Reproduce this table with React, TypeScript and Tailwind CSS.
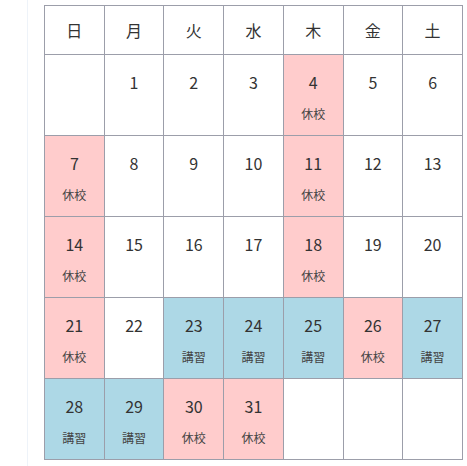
import React from "react";

type Day = { d?: number; note?: "休校" | "講習" };

const weekdays = ["日", "月", "火", "水", "木", "金", "土"];

const weeks: Day[][] = [
  [{}, { d: 1 }, { d: 2 }, { d: 3 }, { d: 4, note: "休校" }, { d: 5 }, { d: 6 }],
  [{ d: 7, note: "休校" }, { d: 8 }, { d: 9 }, { d: 10 }, { d: 11, note: "休校" }, { d: 12 }, { d: 13 }],
  [{ d: 14, note: "休校" }, { d: 15 }, { d: 16 }, { d: 17 }, { d: 18, note: "休校" }, { d: 19 }, { d: 20 }],
  [
    { d: 21, note: "休校" },
    { d: 22 },
    { d: 23, note: "講習" },
    { d: 24, note: "講習" },
    { d: 25, note: "講習" },
    { d: 26, note: "休校" },
    { d: 27, note: "講習" },
  ],
  [{ d: 28, note: "講習" }, { d: 29, note: "講習" }, { d: 30, note: "休校" }, { d: 31, note: "休校" }, {}, {}, {}],
];

function Cell({ day }: { day: Day }) {
  const bg =
    day.note === "休校" ? "bg-[#ffcccc]" : day.note === "講習" ? "bg-[#add8e6]" : "bg-white";
  return (
    <td className={`${bg} border border-[#9c9eaa] h-[81px] p-0 align-top text-center`}>
      {day.d && (
        <div className="pt-[16px] flex flex-col items-center">
          <span className="text-base leading-[22px] text-[#333]">{day.d}</span>
          {day.note && <span className="mt-[12px] text-xs leading-[18px] text-[#444]">{day.note}</span>}
        </div>
      )}
    </td>
  );
}

export default function App() {
  return (
    <div className="min-h-[466px] bg-white font-['Noto_Sans_CJK_JP','Noto_Sans',sans-serif]">
      <div className="ml-[27px] border-l border-[#eef3f9] min-h-[466px] pl-[16px] pt-[5px]">
        <table className="table-fixed border-collapse w-[419px]">
          <thead>
            <tr>
              {weekdays.map((w) => (
                <th
                  key={w}
                  className="border border-[#9c9eaa] h-[49px] p-0 font-normal text-base text-[#333]"
                >
                  {w}
                </th>
              ))}
            </tr>
          </thead>
          <tbody>
            {weeks.map((week, i) => (
              <tr key={i}>
                {week.map((day, j) => (
                  <Cell key={j} day={day} />
                ))}
              </tr>
            ))}
          </tbody>
        </table>
      </div>
    </div>
  );
}
